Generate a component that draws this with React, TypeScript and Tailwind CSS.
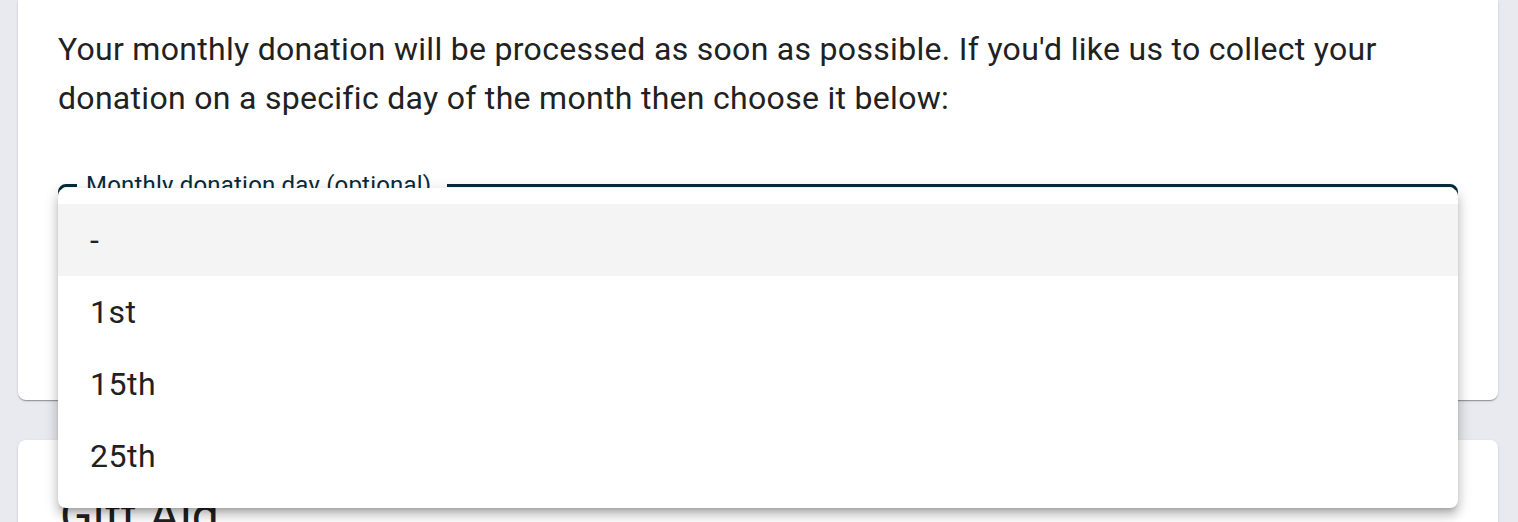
import React from "react";

export default function App() {
  const items = ["-", "1st", "15th", "25th"];
  return (
    <div
      className="relative h-[522px] w-full overflow-hidden bg-[#e9eaef] pl-[18px] pr-[20px]"
      style={{ fontFamily: "Roboto, 'Noto Sans', sans-serif" }}
    >
      <div className="h-[400px] rounded-b-lg bg-white px-[40px] pt-[25px] shadow-[0_2px_1px_-1px_rgba(0,0,0,0.2),0_1px_1px_0_rgba(0,0,0,0.14),0_1px_3px_0_rgba(0,0,0,0.12)]">
        <p className="text-[32px] leading-[49px] tracking-[0.3px] text-[#212121]">
          Your monthly donation will be processed as soon as possible. If you'd like us to collect your
          donation on a specific day of the month then choose it below:
        </p>
        <fieldset className="mt-[47px] h-[130px] rounded-lg border-[3px] border-[#062b3b] px-[16px]">
          <legend className="pl-[9px] pr-[16px] text-[24px] leading-[30px] tracking-[0.2px] text-[#062b3b]">
            Monthly donation day (optional)
          </legend>
        </fieldset>
      </div>
      <div className="mt-[40px] h-[200px] rounded-lg bg-white px-[42px] pt-[48px] shadow-[0_2px_1px_-1px_rgba(0,0,0,0.2),0_1px_1px_0_rgba(0,0,0,0.14),0_1px_3px_0_rgba(0,0,0,0.12)]">
        <h2 className="text-[48px] leading-[56px] text-[#212121]">Gift Aid</h2>
      </div>
      <div className="absolute left-[58px] top-[188px] w-[1400px] rounded-lg bg-white py-[16px] shadow-[0_5px_5px_-3px_rgba(0,0,0,0.2),0_8px_10px_1px_rgba(0,0,0,0.14),0_3px_14px_2px_rgba(0,0,0,0.12)]">
        {items.map((it, i) => (
          <div
            key={it}
            className={`flex h-[72px] items-center px-[32px] text-[32px] tracking-[0.5px] text-[#212121] ${i === 0 ? "bg-[#f4f4f4]" : ""}`}
          >
            {it}
          </div>
        ))}
      </div>
    </div>
  );
}
